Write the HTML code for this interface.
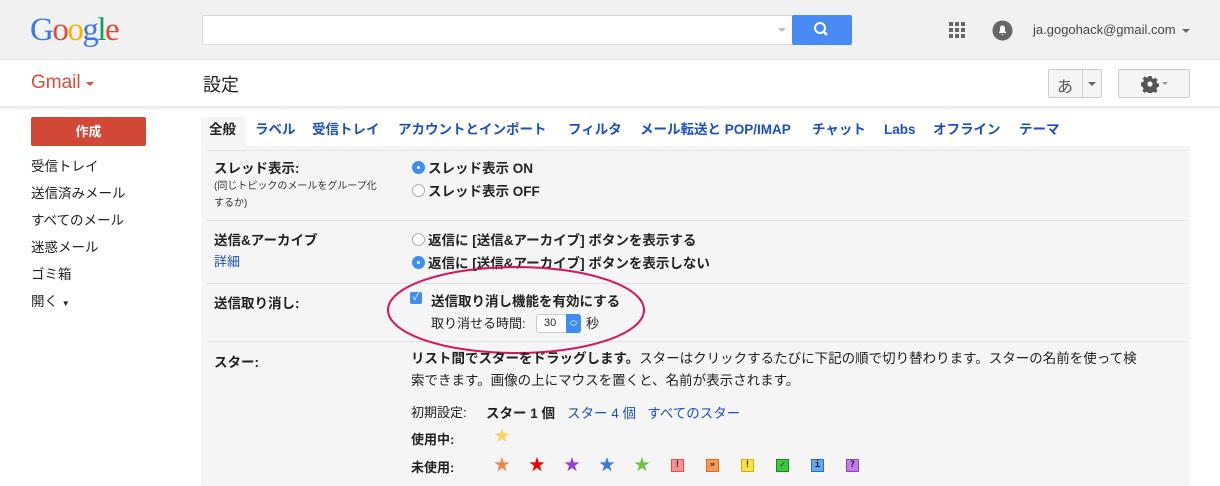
<!DOCTYPE html>
<html><head><meta charset="utf-8">
<style>
*{margin:0;padding:0;box-sizing:border-box}
body{width:1220px;height:486px;overflow:hidden;background:#fff;font-family:"Liberation Sans","Noto Sans CJK JP",sans-serif;font-size:13px;color:#222;position:relative}
.a{position:absolute;white-space:nowrap}
.top{position:absolute;left:0;top:0;width:1220px;height:60px;background:#f1f1f1;border-bottom:1px solid #e5e5e5}
.bar2{position:absolute;left:0;top:60px;width:1220px;height:47px;background:#fff;box-shadow:0 2px 2px rgba(0,0,0,.08);border-bottom:1px solid #e8e8e8}
.blue{color:#1a4fc6}
.b{font-weight:bold}
.panel{position:absolute;left:201px;top:146px;width:989px;height:340px;background:#f5f5f5}
.sep{position:absolute;left:207px;width:979px;height:1px;background:#e2e2e2}
.radio{position:absolute;width:13px;height:13px;border-radius:50%;border:1px solid #aaa;background:#fff}
.radio.on{background:#3d8ef0;border-color:#3d8ef0}
.radio.on::after{content:"";position:absolute;left:4px;top:4px;width:3px;height:3px;border-radius:50%;background:#fff}
.sq{position:absolute;width:13px;height:13px;border:1px solid;font-size:9px;font-weight:bold;text-align:center;line-height:11px;font-family:"DejaVu Sans Mono",monospace;color:#222}
.st{position:absolute;font-size:16px;line-height:16px}
.tab{position:absolute;top:120px;font-size:13.5px;line-height:20px;font-weight:bold;color:#1a4fc6;white-space:nowrap}
</style></head><body>
<div class="top"></div>
<div class="a" style="left:30px;top:12px;font-family:'Liberation Serif',serif;font-size:33px;letter-spacing:-1.5px"><span style="color:#3b78e7">G</span><span style="color:#dd4b39">o</span><span style="color:#f4b400">o</span><span style="color:#3b78e7">g</span><span style="color:#0f9d58">l</span><span style="color:#dd4b39">e</span></div>
<div class="a" style="left:202px;top:15px;width:591px;height:30px;background:#fff;border:1px solid #d9d9d9"></div>
<div class="a" style="left:778px;top:28px;border-left:4px solid transparent;border-right:4px solid transparent;border-top:4px solid #bbb"></div>
<div class="a" style="left:792px;top:15px;width:60px;height:30px;background:#4a8af4;border-radius:2px">
<svg width="60" height="30"><circle cx="28" cy="13" r="5" fill="none" stroke="#fff" stroke-width="2"/><line x1="31.5" y1="16.5" x2="35" y2="20" stroke="#fff" stroke-width="2.5"/></svg></div>
<svg class="a" style="left:949px;top:22px" width="18" height="18"><g fill="#666"><rect x="0" y="0" width="4" height="4"/><rect x="6" y="0" width="4" height="4"/><rect x="12" y="0" width="4" height="4"/><rect x="0" y="6" width="4" height="4"/><rect x="6" y="6" width="4" height="4"/><rect x="12" y="6" width="4" height="4"/><rect x="0" y="12" width="4" height="4"/><rect x="6" y="12" width="4" height="4"/><rect x="12" y="12" width="4" height="4"/></g></svg>
<svg class="a" style="left:992px;top:20px" width="21" height="21"><circle cx="10.5" cy="10.5" r="10" fill="#666"/><path d="M7 13h7v-1l-1-1v-3a2.5 2.5 0 0 0-5 0v3l-1 1z M9.5 14h2a1 1 0 0 1-2 0z" fill="#fff"/></svg>
<div class="a" style="left:1033px;top:22px;font-size:13px;color:#444">ja.gogohack@gmail.com</div>
<div class="a" style="left:1182px;top:29px;border-left:4px solid transparent;border-right:4px solid transparent;border-top:4px solid #666"></div>

<div class="bar2"></div>
<div class="a" style="left:31px;top:72px;font-size:19px;color:#dd4b39">Gmail</div>
<div class="a" style="left:86px;top:82px;border-left:4px solid transparent;border-right:4px solid transparent;border-top:4px solid #dd4b39"></div>
<div class="a" style="left:203px;top:71px;font-size:18px;color:#222">設定</div>
<div class="a" style="left:1048px;top:69px;width:54px;height:29px;border:1px solid #ccc;border-radius:2px;background:#f5f5f5"></div>
<div class="a" style="left:1082px;top:69px;width:1px;height:29px;background:#ccc"></div>
<div class="a" style="left:1057px;top:73px;font-size:16px;color:#555">あ</div>
<div class="a" style="left:1088px;top:82px;border-left:4px solid transparent;border-right:4px solid transparent;border-top:4px solid #666"></div>
<div class="a" style="left:1118px;top:69px;width:72px;height:29px;border:1px solid #ccc;border-radius:2px;background:#f5f5f5"></div>
<svg class="a" style="left:1141px;top:75px" width="18" height="18" viewBox="0 0 18 18"><path fill="#555" d="M7.5 1h3l.5 2.2 1.6.7 1.900-1.2 2.1 2.1-1.2 1.9.7 1.6 2.2.5v3l-2.2.5-.7 1.6 1.2 1.9-2.1 2.1-1.9-1.2-1.6.7-.5 2.2h-3l-.5-2.2-1.6-.7-1.9 1.2-2.1-2.1 1.2-1.9-.7-1.6L0 10.5v-3l2.2-.5.7-1.6L1.7 3.5 3.8 1.4l1.9 1.2L7 2.2z"/><circle cx="9" cy="9" r="2.6" fill="#f5f5f5"/></svg>
<div class="a" style="left:1162px;top:82px;border-left:3px solid transparent;border-right:3px solid transparent;border-top:3px solid #999"></div>

<div class="a" style="left:31px;top:117px;width:115px;height:29px;background:#d14836;border-radius:2px;color:#fff;font-weight:bold;text-align:center;line-height:29px">作成</div>
<div class="a" style="left:31px;top:153px;line-height:27px;font-size:13.5px">受信トレイ<br>送信済みメール<br>すべてのメール<br>迷惑メール<br>ゴミ箱<br>開く <span style="font-size:8px">▼</span></div>

<div class="a" style="left:201px;top:117px;width:45px;height:30px;background:#f5f5f5"></div>
<div class="a b" style="left:209px;top:120px;font-size:13.5px;line-height:20px">全般</div>
<div class="tab" style="left:255px">ラベル</div>
<div class="tab" style="left:312px">受信トレイ</div>
<div class="tab" style="left:398px">アカウントとインポート</div>
<div class="tab" style="left:568px">フィルタ</div>
<div class="tab" style="left:640px">メール転送と POP/IMAP</div>
<div class="tab" style="left:812px">チャット</div>
<div class="tab" style="left:884px">Labs</div>
<div class="tab" style="left:933px">オフライン</div>
<div class="tab" style="left:1019px">テーマ</div>

<div class="panel"></div>
<div class="sep" style="top:150px"></div>
<div class="sep" style="top:220px"></div>
<div class="sep" style="top:283px"></div>
<div class="sep" style="top:341px"></div>

<div class="a b" style="left:214px;top:157px;font-size:13.5px">スレッド表示:</div>
<div class="a" style="left:214px;top:178px;font-size:10px;line-height:17px;color:#333">(同じトピックのメールをグループ化<br>するか)</div>
<div class="radio on" style="left:412px;top:161px"></div>
<div class="a b" style="left:428px;top:157px;font-size:13.5px">スレッド表示 ON</div>
<div class="radio" style="left:412px;top:184px"></div>
<div class="a b" style="left:428px;top:180px;font-size:13.5px">スレッド表示 OFF</div>

<div class="a b" style="left:214px;top:229px;font-size:13.5px">送信&amp;アーカイブ</div>
<div class="a blue" style="left:214px;top:251px;font-size:13px">詳細</div>
<div class="radio" style="left:412px;top:233px"></div>
<div class="a b" style="left:428px;top:229px;font-size:13.5px">返信に [送信&amp;アーカイブ] ボタンを表示する</div>
<div class="radio on" style="left:412px;top:256px"></div>
<div class="a b" style="left:428px;top:252px;font-size:13.5px">返信に [送信&amp;アーカイブ] ボタンを表示しない</div>

<div class="a b" style="left:214px;top:292px;font-size:13.5px">送信取り消し:</div>
<div class="a" style="left:410px;top:292px;width:12px;height:12px;border-radius:2px;background:#3d8ef0;color:#fff;font-size:10px;line-height:12px;text-align:center">✓</div>
<div class="a b" style="left:431px;top:290px;font-size:13.5px">送信取り消し機能を有効にする</div>
<div class="a" style="left:431px;top:313px;font-size:13px">取り消せる時間:</div>
<div class="a" style="left:536px;top:314px;width:45px;height:19px;background:#fff;border:1px solid #ccc;border-radius:3px;font-size:11px;line-height:17px;padding-left:7px">30</div>
<div class="a" style="left:566px;top:314px;width:15px;height:19px;background:#3d8ef0;border-radius:0 3px 3px 0;color:#fff;font-size:8px;line-height:8px;text-align:center;padding-top:2px">︿<br>﹀</div>
<div class="a" style="left:586px;top:313px;font-size:13px">秒</div>
<svg class="a" style="left:385px;top:264px" width="262" height="92"><ellipse cx="131" cy="46" rx="128" ry="43" fill="none" stroke="#d6135f" stroke-width="2"/></svg>

<div class="a b" style="left:214px;top:351px;font-size:13.5px">スター:</div>
<div class="a" style="left:411px;top:348px;font-size:13.5px;line-height:22px"><b>リスト間でスターをドラッグします。</b>スターはクリックするたびに下記の順で切り替わります。スターの名前を使って検<br>索できます。画像の上にマウスを置くと、名前が表示されます。</div>
<div class="a" style="left:411px;top:402px;font-size:13px">初期設定:</div>
<div class="a b" style="left:486px;top:402px;font-size:13.5px">スター 1 個</div>
<div class="a blue" style="left:567px;top:402px;font-size:13.5px">スター 4 個&nbsp;&nbsp;&nbsp;すべてのスター</div>
<div class="a b" style="left:411px;top:429px;font-size:13px">使用中:</div>
<div class="st" style="left:494px;top:429px;color:#fad165">★</div>
<div class="a b" style="left:411px;top:457px;font-size:13px">未使用:</div>
<div class="st" style="left:494px;top:458px;color:#f0874a">★</div>
<div class="st" style="left:529px;top:458px;color:#e00">★</div>
<div class="st" style="left:564px;top:458px;color:#9c3cd6">★</div>
<div class="st" style="left:599px;top:458px;color:#3a7be2">★</div>
<div class="st" style="left:634px;top:458px;color:#6cc644">★</div>
<div class="sq" style="left:671px;top:459px;background:#f7908e;border-color:#e05050">!</div>
<div class="sq" style="left:706px;top:459px;background:#f59b57;border-color:#e06a20">»</div>
<div class="sq" style="left:741px;top:459px;background:#fbe243;border-color:#d0b000">!</div>
<div class="sq" style="left:776px;top:459px;background:#3cc83c;border-color:#1a8a1a">✓</div>
<div class="sq" style="left:811px;top:459px;background:#64a8f0;border-color:#2a70c0">i</div>
<div class="sq" style="left:846px;top:459px;background:#c37cf0;border-color:#9040c0">?</div>
</body></html>
